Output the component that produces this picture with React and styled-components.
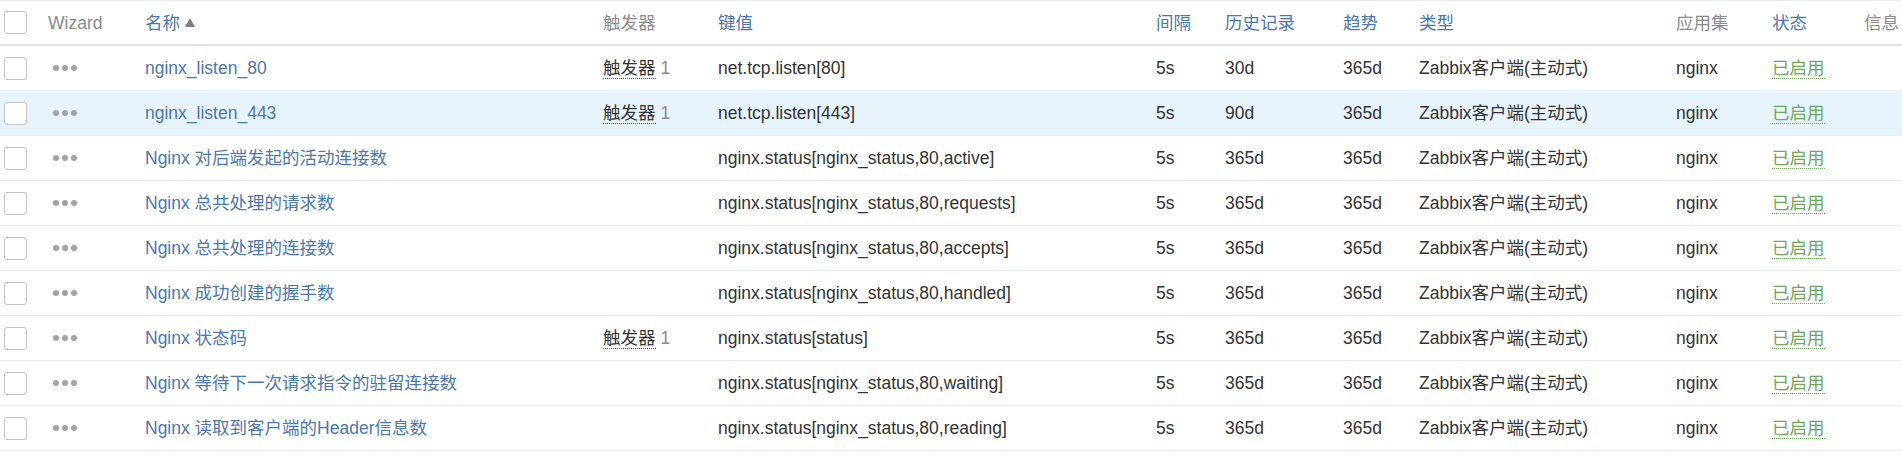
import React from 'react';
import styled, { createGlobalStyle } from 'styled-components';

const GlobalStyle = createGlobalStyle`
  html, body {
    margin: 0;
    padding: 0;
    background: #fff;
    overflow: hidden;
  }
  body {
    font-family: "Liberation Sans", Arial, "Noto Sans CJK SC", sans-serif;
    font-size: 17.5px;
    color: #333;
  }
`;

const COLUMNS = '48px 97px 458px 115px 438px 69px 118px 76px 257px 96px 92px 1fr';

const items = [
  { name: 'nginx_listen_80', triggers: 1, key: 'net.tcp.listen[80]', history: '30d' },
  { name: 'nginx_listen_443', triggers: 1, key: 'net.tcp.listen[443]', history: '90d', hover: true },
  { name: 'Nginx 对后端发起的活动连接数', key: 'nginx.status[nginx_status,80,active]', history: '365d' },
  { name: 'Nginx 总共处理的请求数', key: 'nginx.status[nginx_status,80,requests]', history: '365d' },
  { name: 'Nginx 总共处理的连接数', key: 'nginx.status[nginx_status,80,accepts]', history: '365d' },
  { name: 'Nginx 成功创建的握手数', key: 'nginx.status[nginx_status,80,handled]', history: '365d' },
  { name: 'Nginx 状态码', triggers: 1, key: 'nginx.status[status]', history: '365d' },
  { name: 'Nginx 等待下一次请求指令的驻留连接数', key: 'nginx.status[nginx_status,80,waiting]', history: '365d' },
  { name: 'Nginx 读取到客户端的Header信息数', key: 'nginx.status[nginx_status,80,reading]', history: '365d' },
  { name: 'Nginx 写入到客户端的连接数', key: 'nginx.status[nginx_status,80,writing]', history: '365d' },
];

const Table = styled.div`
  width: 100%;
`;

const HeaderRow = styled.div`
  display: grid;
  grid-template-columns: ${COLUMNS};
  align-items: center;
  height: 43px;
  border-top: 1px solid #eceff1;
  border-bottom: 2px solid #dde1e4;
`;

const Row = styled.div`
  display: grid;
  grid-template-columns: ${COLUMNS};
  align-items: center;
  height: 44px;
  border-bottom: 1px solid #eceff1;
  background: ${(p) => (p.$hover ? '#e8f4fd' : '#fff')};
`;

const Cell = styled.div`
  white-space: nowrap;
  overflow: hidden;
  line-height: 22px;
`;

const HeadCell = styled.div`
  white-space: nowrap;
  line-height: 22px;
  color: ${(p) => (p.$sortable ? '#4b78ae' : '#8a8a8a')};
`;

const SortArrow = styled.span`
  display: inline-block;
  width: 0;
  height: 0;
  margin-left: 5px;
  vertical-align: 2px;
  border-left: 5px solid transparent;
  border-right: 5px solid transparent;
  border-bottom: 9px solid #7d7d7d;
`;

const Checkbox = styled.span`
  display: block;
  box-sizing: border-box;
  width: 23px;
  height: 23px;
  margin-left: 4px;
  border: 1px solid #c4c4c4;
  border-radius: 3px;
  background: #fff;
`;

const Dots = styled.span`
  display: flex;
  gap: 3px;
  margin-left: 5px;
`;

const Dot = styled.span`
  width: 6px;
  height: 6px;
  border-radius: 50%;
  background: #a3a3a3;
`;

const NameLink = styled.span`
  color: #4b78ae;
`;

const Hint = styled.span`
  border-bottom: 1px dotted ${(p) => p.$color || '#555'};
  color: ${(p) => p.$color || '#333'};
`;

const Count = styled.span`
  color: #8c8c8c;
  margin-left: 5px;
`;

const App = () => (
  <Table>
    <GlobalStyle />
    <HeaderRow>
      <Cell><Checkbox /></Cell>
      <HeadCell>Wizard</HeadCell>
      <HeadCell $sortable>名称<SortArrow /></HeadCell>
      <HeadCell>触发器</HeadCell>
      <HeadCell $sortable>键值</HeadCell>
      <HeadCell $sortable>间隔</HeadCell>
      <HeadCell $sortable>历史记录</HeadCell>
      <HeadCell $sortable>趋势</HeadCell>
      <HeadCell $sortable>类型</HeadCell>
      <HeadCell>应用集</HeadCell>
      <HeadCell $sortable>状态</HeadCell>
      <HeadCell>信息</HeadCell>
    </HeaderRow>
    {items.map((item) => (
      <Row key={item.key} $hover={item.hover}>
        <Cell><Checkbox /></Cell>
        <Cell>
          <Dots><Dot /><Dot /><Dot /></Dots>
        </Cell>
        <Cell><NameLink>{item.name}</NameLink></Cell>
        <Cell>
          {item.triggers ? (
            <>
              <Hint>触发器</Hint>
              <Count>{item.triggers}</Count>
            </>
          ) : null}
        </Cell>
        <Cell>{item.key}</Cell>
        <Cell>5s</Cell>
        <Cell>{item.history}</Cell>
        <Cell>365d</Cell>
        <Cell>Zabbix客户端(主动式)</Cell>
        <Cell>nginx</Cell>
        <Cell><Hint $color="#6ea85c">已启用</Hint></Cell>
        <Cell />
      </Row>
    ))}
  </Table>
);

export default App;
